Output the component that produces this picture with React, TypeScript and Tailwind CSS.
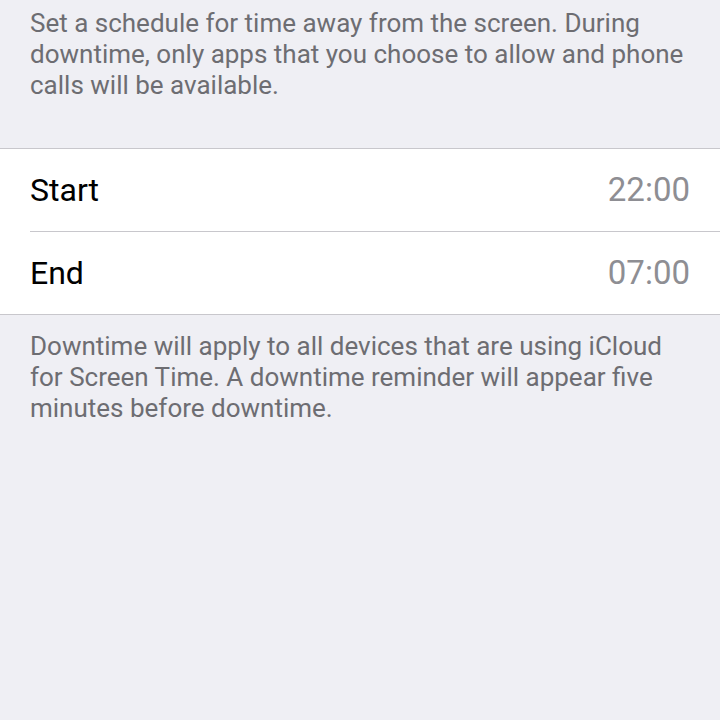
export default function App() {
  return (
    <div className="min-h-[720px] w-[720px] bg-[#efeff4] font-['Roboto',sans-serif]">
      {/* Header note */}
      <div className="px-[30px] pt-[8px] pb-[47px]">
        <p className="text-[26px] leading-[31px] text-[#6d6d72]">
          Set a schedule for time away from the screen. During downtime, only apps that you choose to allow and phone calls will be available.
        </p>
      </div>

      {/* Schedule rows */}
      <div className="bg-white border-y border-[#c8c7cc]">
        <div className="flex items-center justify-between h-[82px] px-[30px]">
          <span className="text-[32px] text-black">Start</span>
          <span className="text-[33px] text-[#8e8e93]">22:00</span>
        </div>
        <div className="ml-[30px] border-t border-[#c8c7cc]" />
        <div className="flex items-center justify-between h-[82px] px-[30px]">
          <span className="text-[32px] text-black">End</span>
          <span className="text-[33px] text-[#8e8e93]">07:00</span>
        </div>
      </div>

      {/* Footer note */}
      <div className="px-[30px] pt-[16px]">
        <p className="text-[26px] leading-[31px] text-[#6d6d72]">
          Downtime will apply to all devices that are using iCloud for Screen Time. A downtime reminder will appear five minutes before downtime.
        </p>
      </div>
    </div>
  );
}
